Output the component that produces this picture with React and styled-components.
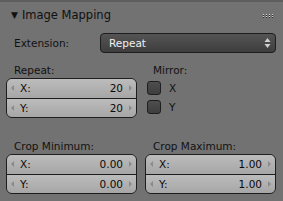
import React from 'react';
import styled, { createGlobalStyle } from 'styled-components';

const GlobalStyle = createGlobalStyle`
    html, body {
        margin: 0;
        padding: 0;
        background: #727272;
    }
    body {
        font-family: "DejaVu Sans", "Liberation Sans", sans-serif;
        -webkit-font-smoothing: antialiased;
    }
`

const Panel = styled.div`
    width: 283px;
    height: 201px;
    background: #727272;
    border-top: 2px solid #5e5e5e;
    box-sizing: border-box;
    color: #000;
`

const Header = styled.div`
    display: flex;
    align-items: center;
    height: 25px;
    padding: 0 10px 0 11px;
    font-size: 11.5px;
    color: #101010;
    .arrow{
        font-size: 9px;
        margin-right: 4px;
    }
    .title{
        flex: 1;
    }
`

const Grip = styled.div`
    display: grid;
    grid-template-columns: repeat(4, 1px);
    gap: 1px 2px;
    margin-top: 2px;
    span{
        width: 1px;
        height: 1px;
        background: #d8d8d8;
        box-shadow: 0 1px 0 #2a2a2a;
    }
`

const Body = styled.div`
    padding: 6px 7px 0 6px;
    font-size: 10px;
`

const Row = styled.div`
    display: flex;
    align-items: center;
    height: 19px;
`

const Label = styled.div`
    box-sizing: border-box;
    width: ${props => props.width || 'auto'};
    padding-left: 8px;
    color: #111;
    font-size: 10.5px;
`

const Dropdown = styled.div`
    flex: 1;
    display: flex;
    align-items: center;
    justify-content: space-between;
    height: 20px;
    box-sizing: border-box;
    border: 1px solid #1e1e1e;
    border-radius: 4px;
    background: linear-gradient(#545454, #3e3e3e);
    color: #f0f0f0;
    font-size: 10.5px;
    padding: 0 4px 0 8px;
`

const Columns = styled.div`
    display: grid;
    grid-template-columns: 131px 131px;
    gap: 8px;
    margin-top: ${props => props.top}px;
`

const ColLabel = styled.div`
    height: 17px;
    padding-left: 8px;
    font-size: 10.5px;
    color: #111;
    display: flex;
    align-items: center;
`

const NumGroup = styled.div`
    border: 1px solid #1e1e1e;
    border-radius: 6px;
    overflow: hidden;
    box-sizing: border-box;
    height: 40px;
    display: flex;
    flex-direction: column;
`

const NumField = styled.div`
    flex: 1;
    display: flex;
    align-items: center;
    padding: 0 4px 0 4px;
    background: linear-gradient(#bcbcbc, #a6a6a6);
    color: #0a0a0a;
    font-size: 10.5px;
    & + &{
        border-top: 1px solid #1e1e1e;
    }
    .name{
        flex: 1;
        margin-left: 6px;
    }
    .value{
        margin-right: 6px;
    }
`

const Tri = styled.span`
    width: 0;
    height: 0;
    border-top: 3px solid transparent;
    border-bottom: 3px solid transparent;
    ${props => props.dir === 'left'
        ? 'border-right: 3px solid #8a8a8a;'
        : 'border-left: 3px solid #8a8a8a;'}
`

const CheckRow = styled.div`
    display: flex;
    align-items: center;
    height: 19px;
    padding-left: 2px;
    font-size: 10.5px;
    color: #111;
`

const Box = styled.span`
    width: 14px;
    height: 14px;
    box-sizing: border-box;
    border: 1px solid #1e1e1e;
    border-radius: 3px;
    background: linear-gradient(#4e4e4e, #3e3e3e);
    margin-right: 8px;
`

const Number = ({ name, value }) => (
    <NumField>
        <Tri dir='left' />
        <span className='name'>{name}</span>
        <span className='value'>{value}</span>
        <Tri dir='right' />
    </NumField>
)

const UpDown = () => (
    <svg width="7" height="12" viewBox="0 0 7 12">
        <path d="M3.5 1 L6.5 5 L0.5 5 Z" fill="#d0d0d0" />
        <path d="M3.5 11 L6.5 7 L0.5 7 Z" fill="#d0d0d0" />
    </svg>
)

const App = () => {
    return (
        <>
            <GlobalStyle />
            <Panel>
                <Header>
                    <span className='arrow'>▼</span>
                    <span className='title'>Image Mapping</span>
                    <Grip>{[...Array(8)].map((_, i) => <span key={i} />)}</Grip>
                </Header>
                <Body>
                    <Row>
                        <Label width='94px'>Extension:</Label>
                        <Dropdown>
                            <span>Repeat</span>
                            <UpDown />
                        </Dropdown>
                    </Row>
                    <Columns top={9}>
                        <div>
                            <ColLabel>Repeat:</ColLabel>
                            <NumGroup>
                                <Number name='X:' value='20' />
                                <Number name='Y:' value='20' />
                            </NumGroup>
                        </div>
                        <div>
                            <ColLabel>Mirror:</ColLabel>
                            <CheckRow><Box />X</CheckRow>
                            <CheckRow><Box />Y</CheckRow>
                        </div>
                    </Columns>
                    <Columns top={19}>
                        <div>
                            <ColLabel>Crop Minimum:</ColLabel>
                            <NumGroup>
                                <Number name='X:' value='0.00' />
                                <Number name='Y:' value='0.00' />
                            </NumGroup>
                        </div>
                        <div>
                            <ColLabel>Crop Maximum:</ColLabel>
                            <NumGroup>
                                <Number name='X:' value='1.00' />
                                <Number name='Y:' value='1.00' />
                            </NumGroup>
                        </div>
                    </Columns>
                </Body>
            </Panel>
        </>
    );
};

export default App;
